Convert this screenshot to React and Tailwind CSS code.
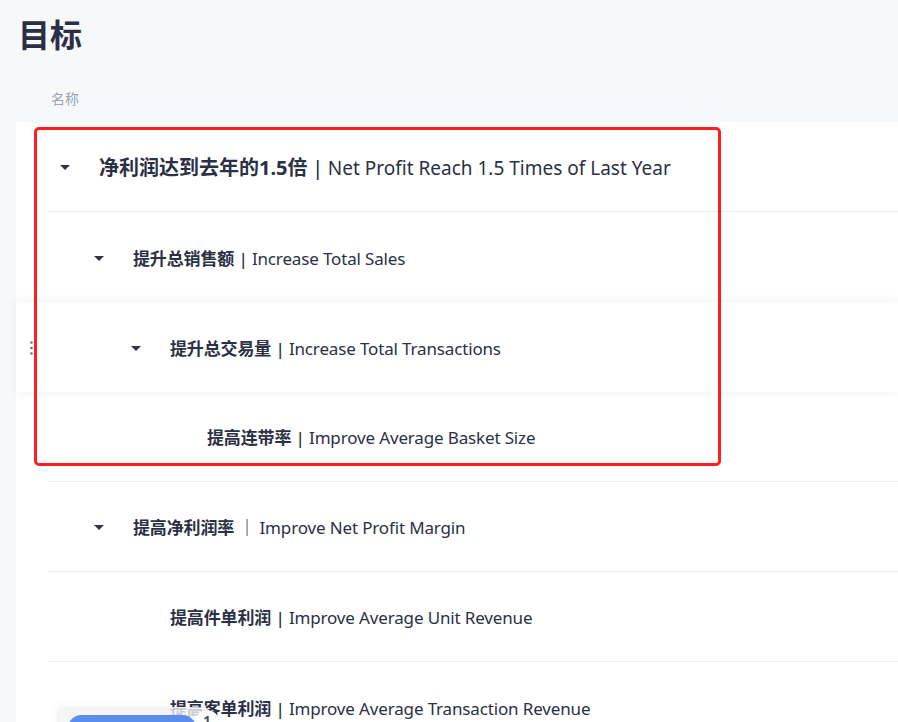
import React from "react";

const rows = [
  { level: 0, caret: true, zh: "净利润达到去年的1.5倍", en: "Net Profit Reach 1.5 Times of Last Year", big: true },
  { level: 1, caret: true, zh: "提升总销售额", en: "Increase Total Sales" },
  { level: 2, caret: true, zh: "提升总交易量", en: "Increase Total Transactions", dragging: true },
  { level: 3, caret: false, zh: "提高连带率", en: "Improve Average Basket Size" },
  { level: 1, caret: true, zh: "提高净利润率", en: "Improve Net Profit Margin", wide: true },
  { level: 2, caret: false, zh: "提高件单利润", en: "Improve Average Unit Revenue" },
  { level: 2, caret: false, zh: "提高客单利润", en: "Improve Average Transaction Revenue" },
];

const indents = ["ml-0", "ml-[34px]", "ml-[71px]", "ml-[108px]"];

const Caret = () => (
  <svg width="10" height="6" viewBox="0 0 10 6" className="text-[#2f3446]">
    <path d="M0 0 L10 0 L5 5 Z" fill="currentColor" />
  </svg>
);

const Grip = () => (
  <svg width="7" height="14" viewBox="0 0 7 14" className="text-[#6b7280]">
    {[1.5, 7, 12.5].map((y) => (
      <g key={y}>
        <circle cx="1.5" cy={y} r="1.3" fill="currentColor" />
        <circle cx="5.5" cy={y} r="1.3" fill="currentColor" />
      </g>
    ))}
  </svg>
);

const Row = ({ row, last, nextDragging }) => {
  const noBorder = last || row.dragging || nextDragging;
  return (
    <div
      className={
        row.dragging
          ? "relative z-10 flex h-[90px] bg-white shadow-[0_0_10px_rgba(30,40,70,0.07)]"
          : "flex h-[90px] bg-white"
      }
    >
      <div className="flex w-8 shrink-0 items-center justify-center pl-[2px] pt-[2px]">
        {row.dragging && <Grip />}
      </div>
      <div
        className={
          noBorder
            ? "flex flex-1 items-center pl-3 pt-[3px]"
            : "flex flex-1 items-center border-b border-[#e9edf3] pl-3 pt-[3px]"
        }
      >
        <div className={`flex items-center ${indents[row.level]}`}>
          <div className="flex w-[39px] shrink-0 items-center">
            {row.caret && <Caret />}
          </div>
          <div
            className={
              row.big
                ? "whitespace-nowrap text-[19px] text-[#2b3044]"
                : "whitespace-nowrap text-[17px] tracking-[-0.15px] text-[#2b3044]"
            }
          >
            <span className={row.big ? "text-[20px] font-bold" : "font-bold"}>{row.zh}</span>
            {row.wide ? (
              <span className="font-bold text-[#2b3044]"> ｜ </span>
            ) : (
              <span className="font-medium"> | </span>
            )}
            <span>{row.en}</span>
          </div>
        </div>
      </div>
    </div>
  );
};

export default function App() {
  return (
    <div
      className="relative h-[722px] w-[898px] overflow-hidden bg-[#f7f8fa]"
      style={{ fontFamily: '"Noto Sans", "Noto Sans CJK SC", sans-serif' }}
    >
      <div className="pl-4 pt-[14px]">
        <h1 className="ml-0.5 text-[32px] font-bold leading-[42px] text-[#2a2f45]">目标</h1>
        <div className="mt-[31px] h-[35px] pl-[35px] text-[14px] leading-[24px] text-[#9ba4b1]">名称</div>
        <div className="rounded-l-md bg-white">
          {rows.map((row, i) => (
            <Row
              key={i}
              row={row}
              last={i === rows.length - 1}
              nextDragging={rows[i + 1]?.dragging}
            />
          ))}
        </div>
      </div>

      {/* annotation box */}
      <div className="pointer-events-none absolute left-[34px] top-[127px] z-20 h-[339px] w-[687px] rounded-[5px] border-[3px] border-[#ff1f1f]" />

      {/* floating pill at the bottom */}
      <div className="absolute left-[57px] top-[707px] z-20 h-[30px] w-[148px] rounded-t-md bg-[#f2f3f5]/80 shadow-[0_-2px_8px_rgba(0,0,0,0.04)]" />
      <div className="absolute left-[67px] top-[715px] z-20 h-[30px] w-[130px] rounded-full bg-[#5b8def]" />
      <div className="absolute left-[195px] top-[710px] z-20 flex h-[24px] w-[24px] items-start justify-center rounded-full bg-white pt-[3px] text-[13px] font-bold leading-[14px] text-[#4a5068]">
        1
      </div>
    </div>
  );
}
